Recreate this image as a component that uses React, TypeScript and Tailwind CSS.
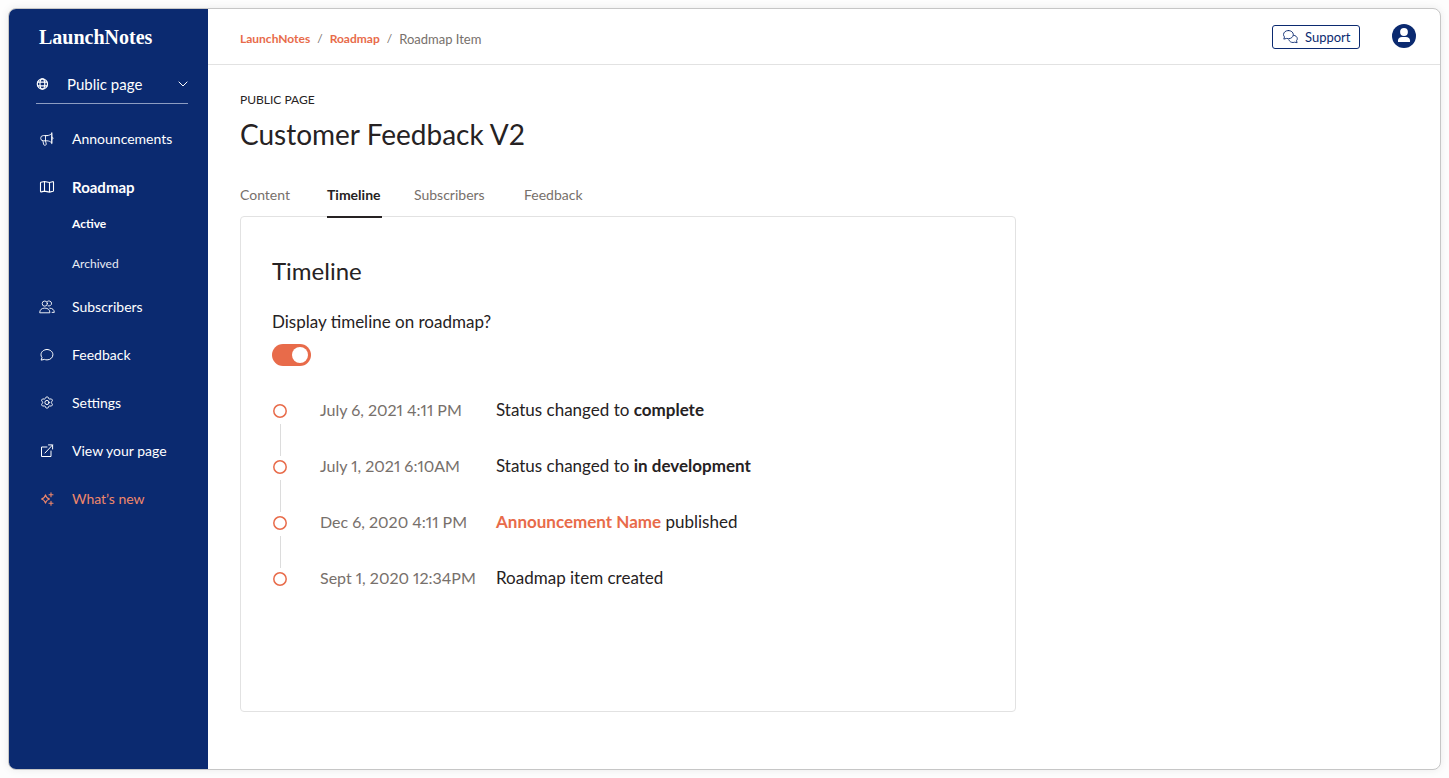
import type { ReactNode } from "react";

function Icon({ children, className = "size-4" }: { children: ReactNode; className?: string }) {
  return (
    <svg
      viewBox="0 0 16 16"
      fill="none"
      stroke="currentColor"
      strokeLinecap="round"
      strokeLinejoin="round"
      aria-hidden="true"
      className={`shrink-0 ${className}`}
    >
      {children}
    </svg>
  );
}

const icons = {
  globe: (
    <g strokeWidth="1.6">
      <circle cx="8.500" cy="8" r="6.800" />
      <ellipse cx="8.500" cy="8" rx="3.200" ry="6.800" />
      <path d="M2.300 5.600h12.400M2.300 10.400h12.400" />
    </g>
  ),
  megaphone: (
    <g strokeWidth="0.9">
      <path d="M8 4.600H4.300a2.600 2.600 0 0 0 0 5.200H8c1.900 0 3.600.9 4.800 2.300V2.300C11.600 3.700 9.900 4.600 8 4.600zM6.500 4.600v5.200M12.800 1.700v11M12.800 6.100c.8 0 1.200.5 1.200 1.100s-.4 1.100-1.200 1.100M3.900 9.900l.8 3.700c.1.400.5.700.9.600l1.100-.2c.4-.1.700-.5.600-.9l-.8-3.200" />
    </g>
  ),
  map: (
    <path
      strokeWidth="1.100"
      d="M1.500 3.900c0-.3.200-.5.400-.6L5.500 2.500l5 1 3.200-.8c.4-.1.800.1.800.6v8.300c0 .3-.2.500-.4.600l-3.600.9-5-1-3.200.8c-.4.100-.8-.1-.8-.6zM5.500 2.500v9.600M10.500 3.500v9.600"
    />
  ),
  users: (
    <g strokeWidth="0.9">
      <circle cx="5.800" cy="4.600" r="2.600" />
      <path d="M8.500 2.300a2.600 2.600 0 1 1 .6 4.600M.7 13.400c0-2.600 1.900-4.300 5.100-4.300s5.100 1.700 5.100 4.300zM10.800 9.200c2.800 0 4.500 1.700 4.500 4.200h-2.200" />
    </g>
  ),
  chat: (
    <path
      strokeWidth="1"
      d="M8 2.500c3.300 0 5.900 2.300 5.900 5.200s-2.600 5.200-5.900 5.200c-.9 0-1.700-.2-2.500-.5l-3.400.7.900-2.500C2.300 9.700 2 8.700 2 7.700 2 4.800 4.700 2.500 8 2.500z"
    />
  ),
  gear: (
    <g strokeWidth="1">
      <circle cx="8" cy="7.500" r="2.100" />
      <path d="M6.700 2.500c.3-.9 2.300-.9 2.600 0l.3.900c.2.500.8.800 1.300.7l1-.2c.9-.2 1.900 1.500 1.300 2.200l-.7.700c-.3.400-.3 1 0 1.400l.7.700c.6.700-.4 2.400-1.300 2.200l-1-.2c-.5-.1-1.100.2-1.300.7l-.3.900c-.3.900-2.300.9-2.600 0l-.3-.9c-.2-.5-.8-.8-1.300-.7l-1 .2c-.9.200-1.900-1.500-1.300-2.200l.7-.7c.3-.4.300-1 0-1.400l-.7-.7c-.6-.7.400-2.400 1.300-2.200l1 .2c.5.100 1.100-.2 1.300-.7z" />
    </g>
  ),
  external: (
    <path strokeWidth="1" strokeLinejoin="miter" d="M8 4H2.500v9.500H12V8M6 10l7.500-8M9.500 1.900h4.100V6" />
  ),
  sparkle: (
    <path
      strokeWidth="1.100"
      d="M6.500 3.800c.6 2.400 1.500 3.500 4 4.200-2.500.7-3.400 1.800-4 4.200-.6-2.400-1.500-3.500-4-4.200 2.500-.7 3.400-1.800 4-4.200zM12 1.700v4M10 3.700h4M12 10.300v4M10 12.300h4"
    />
  ),
};

const navAfter = [
  { label: "Subscribers", icon: icons.users, tone: "text-white" },
  { label: "Feedback", icon: icons.chat, tone: "text-white" },
  { label: "Settings", icon: icons.gear, tone: "text-white" },
  { label: "View your page", icon: icons.external, tone: "text-white" },
  { label: "What’s new", icon: icons.sparkle, tone: "text-[#f0876a]" },
];

function NavItem({ label, icon, tone = "text-white", bold = false }: { label: string; icon: ReactNode; tone?: string; bold?: boolean }) {
  return (
    <a href="#" className={`flex h-12 items-center gap-[17px] ${tone}`}>
      <Icon>{icon}</Icon>
      <span className={bold ? "text-[15px] font-bold" : ""}>{label}</span>
    </a>
  );
}

function Sidebar() {
  return (
    <aside className="w-[199px] shrink-0 bg-[#0b2a70] text-[14px] leading-5 text-white">
      <a href="#" className="mt-4 ml-[30px] block font-['Liberation_Serif',serif] text-[20px] leading-6 font-bold">
        LaunchNotes
      </a>
      <button
        type="button"
        className="mt-[17px] mr-5 ml-[27px] flex h-[38px] w-[152px] items-center border-b border-[#8d9dc2] pb-px text-left text-[15px]"
      >
        <Icon className="size-3">{icons.globe}</Icon>
        <span className="ml-[19px] flex-1">Public page</span>
        <svg viewBox="0 0 10 6" className="h-1.5 w-2.5" fill="none" stroke="currentColor" strokeWidth="1" aria-hidden="true">
          <path d="M.7.700 5 5 9.300.700" />
        </svg>
      </button>
      <nav className="mt-[11px] pl-[30px]">
        <NavItem label="Announcements" icon={icons.megaphone} />
        <NavItem label="Roadmap" icon={icons.map} bold />
        <div className="flex flex-col gap-[14px] pb-1.5 pl-[33px] text-[12px]">
          <a href="#" className="flex h-[26px] items-center font-bold">Active</a>
          <a href="#" className="flex h-[26px] items-center text-[#e9edf5]">Archived</a>
        </div>
        {navAfter.map((item) => (
          <NavItem key={item.label} {...item} />
        ))}
      </nav>
    </aside>
  );
}

function Header() {
  return (
    <header className="flex h-14 items-center justify-between border-b border-[#e2e2e2] pr-6 pl-8">
      <nav aria-label="Breadcrumb" className="flex gap-[7px] pt-1 text-[12px] leading-4 text-[#77706b]">
        <a href="#" className="font-bold text-[#e86b4a]">LaunchNotes</a>
        <span>/</span>
        <a href="#" className="font-bold text-[#e86b4a]">Roadmap</a>
        <span>/</span>
        <span className="text-[13px]">Roadmap Item</span>
      </nav>
      <div className="flex items-center gap-8">
        <button
          type="button"
          className="flex h-6 w-[88px] items-center gap-[7px] rounded-[3px] border border-[#0b2a70] pl-[9px] text-[13px] leading-4 text-[#0b2a70]"
        >
          <Icon>
            <g strokeWidth="0.9">
              <path d="M6.400 1.500c2.800 0 4.900 1.800 4.900 4.100s-2.100 4.100-4.900 4.100c-.6 0-1.200-.1-1.700-.3l-2.900.7.700-2.200C1.900 7.300 1.500 6.500 1.500 5.600c0-2.300 2.100-4.100 4.900-4.100z" />
              <path d="M11.600 6.200c2.100.3 3.700 1.700 3.700 3.500 0 .8-.3 1.400-.8 2l.6 2-2.400-.5c-.5.200-1 .3-1.600.3-2.100 0-3.800-1.100-4.300-2.700" />
            </g>
          </Icon>
          Support
        </button>
        <button type="button" aria-label="Account" className="mb-0.5 size-6 text-[#0b2a70]">
          <svg viewBox="0 0 24 24" className="size-6" aria-hidden="true">
            <circle cx="12" cy="12" r="12" fill="currentColor" />
            <circle cx="12" cy="8" r="3.900" fill="#fff" />
            <path d="M6 18v-1.500c0-2 1.700-3.400 4-3.400h4c2.300 0 4 1.400 4 3.400V18z" fill="#fff" />
          </svg>
        </button>
      </div>
    </header>
  );
}

const tabs = [
  { label: "Content", width: "min-w-[55px]", active: false },
  { label: "Timeline", width: "min-w-[55px]", active: true },
  { label: "Subscribers", width: "min-w-[78px]", active: false },
  { label: "Feedback", width: "min-w-[62px]", active: false },
];

const events: { date: string; text: ReactNode }[] = [
  { date: "July 6, 2021 4:11 PM", text: <>Status changed to <strong>complete</strong></> },
  { date: "July 1, 2021 6:10AM", text: <>Status changed to <strong>in development</strong></> },
  {
    date: "Dec 6, 2020 4:11 PM",
    text: <><a href="#" className="font-bold text-[#e86b4a]">Announcement Name</a> published</>,
  },
  { date: "Sept 1, 2020 12:34PM", text: "Roadmap item created" },
];

export default function App() {
  return (
    <div className="flex min-h-screen bg-[#fdfdfd] p-2 font-['Lato',sans-serif] text-[#262223]">
      <div className="flex flex-1 overflow-hidden rounded-lg border border-[#c6c6c6] bg-white shadow-[0_0_8px_rgba(0,0,0,0.08)]">
        <Sidebar />
        <div className="min-w-0 flex-1">
          <Header />
          <main className="px-8 pt-[27px] pb-8">
            <p className="text-[12px] leading-4">PUBLIC PAGE</p>
            <h1 className="mt-1.5 text-[28px] leading-10">Customer Feedback V2</h1>
            <div role="tablist" className="mt-[31px] flex gap-8 text-[14px] leading-5">
              {tabs.map((tab) => (
                <button
                  key={tab.label}
                  type="button"
                  role="tab"
                  aria-selected={tab.active}
                  className={`relative z-10 -mb-0.5 pb-[11px] text-left ${tab.width} ${
                    tab.active ? "border-b-2 border-[#262223] font-bold" : "border-b-2 border-transparent text-[#77706b]"
                  }`}
                >
                  {tab.label}
                </button>
              ))}
            </div>
            <section className="min-h-[496px] max-w-[776px] rounded border border-[#e2e2e2] px-[31px] pt-[38px] pb-8">
              <h2 className="text-[24px] leading-8">Timeline</h2>
              <label className="mt-[23px] flex w-fit cursor-pointer flex-col gap-2.5 text-[17px] leading-6">
                Display timeline on roadmap?
                <input type="checkbox" role="switch" defaultChecked className="peer sr-only" />
                <span className="flex h-[22px] w-[39px] items-center rounded-full bg-[#b5b5b5] px-[3px] peer-checked:justify-end peer-checked:bg-[#e86b4a]">
                  <span className="size-4 rounded-full bg-white" />
                </span>
              </label>
              <ol className="mt-8 text-[17px] leading-6">
                {events.map((event, i) => (
                  <li key={event.date} className="grid h-14 grid-cols-[48px_176px_1fr]">
                    <div className="flex w-4 flex-col items-center gap-1.5 pt-1.5">
                      <svg viewBox="0 0 14 14" className="size-[14px] shrink-0" aria-hidden="true">
                        <circle cx="7" cy="7" r="6.200" fill="none" stroke="#e86b4a" strokeWidth="1.500" />
                      </svg>
                      {i < events.length - 1 && <span className="h-8 w-px shrink-0 bg-[#dcdcdc]" />}
                    </div>
                    <time className="text-[16px] text-[#77706b] proportional-nums">{event.date}</time>
                    <p>{event.text}</p>
                  </li>
                ))}
              </ol>
            </section>
          </main>
        </div>
      </div>
    </div>
  );
}
